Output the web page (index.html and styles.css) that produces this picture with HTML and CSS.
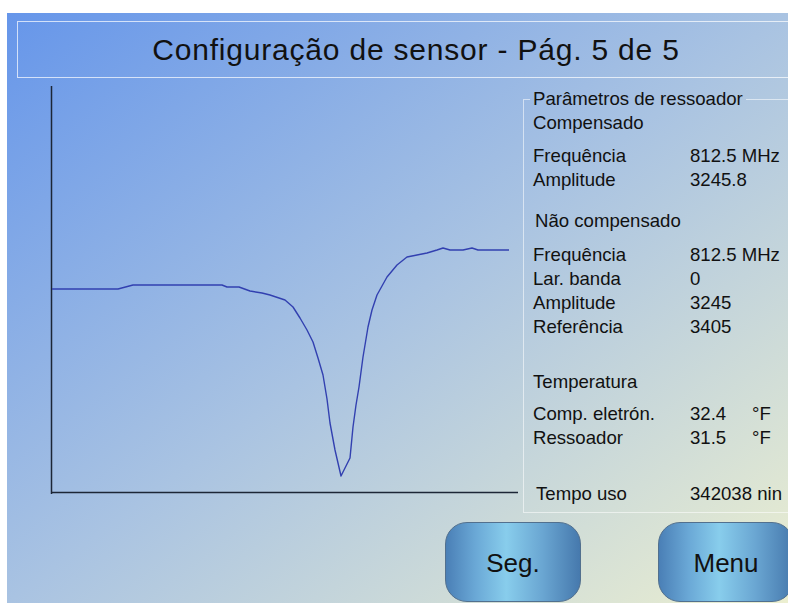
FILE: index.html
```html
<!DOCTYPE html>
<html lang="pt">
<head>
    <meta charset="UTF-8">
    <meta name="viewport" content="width=device-width, initial-scale=1.0">
    <title>Configuração de sensor</title>

    <link rel="stylesheet" href="styles.css">
</head>
<body>
    <div class="screen">
        <header class="title-bar">
            <h1>Configuração de sensor - Pág. 5 de 5</h1>
        </header>

        <main class="content">
            <!-- resonance curve -->
            <svg class="chart" width="475" height="420" viewBox="44 80 475 420">
                <line class="axis" x1="51.5" y1="86" x2="51.5" y2="494"></line>
                <line class="axis" x1="51" y1="492.5" x2="518" y2="492.5"></line>
                <polyline class="curve" points="52,289 118,289 133,285 222,285 227,287 239,287 250,291 262,293 270,295 285,300 293,307 300,318 307,330 313,342 318,358 323,375 327,399 330,423 335,450 341,476 350,458 353,427 356,405 359,387 363,357 368,327 372,310 377,295 382,286 387,277 397,265 407,257 417,255 427,253 437,250 443,248 450,250 463,250 472,248 478,250 509,250"></polyline>
            </svg>

            <fieldset class="params">
                <legend>Parâmetros de ressoador</legend>

                <div class="section-title">Compensado</div>
                <div class="rows first">
                    <span>Frequência</span><span>812.5 MHz</span>
                    <span>Amplitude</span><span>3245.8</span>
                </div>

                <div class="section-title shifted">Não compensado</div>
                <div class="rows shifted after-title">
                    <span>Frequência</span><span>812.5 MHz</span>
                    <span>Lar. banda</span><span>0</span>
                    <span>Amplitude</span><span>3245</span>
                    <span>Referência</span><span>3405</span>
                </div>

                <div class="section-title temp-title">Temperatura</div>
                <div class="rows temp">
                    <span>Comp. eletrón.</span><span>32.4</span><span>°F</span>
                    <span>Ressoador</span><span>31.5</span><span>°F</span>
                </div>

                <div class="rows usage">
                    <span>Tempo uso</span><span>342038 nin</span>
                </div>
            </fieldset>
        </main>

        <footer class="actions">
            <button class="key">Seg.</button>
            <button class="key">Menu</button>
        </footer>
    </div>
</body>
</html>
```

FILE: styles.css
```css
/* page */
body {
    margin: 0;
    background-color: #fff;
    font-family: "Liberation Sans", Arial, sans-serif;
    color: #111;
}

.screen {
    margin: 13px 0 0 7px;
    height: 590px;
    overflow: hidden;
    background: linear-gradient(to bottom right, #6696ea 0%, #a9c3e2 50%, #ecefd0 100%);
}

/* title */
.title-bar {
    margin: 8px 0 0 10px;
    width: 798px;
    height: 57px;
    box-sizing: border-box;
    border: 1px solid rgba(255, 255, 255, 0.7);
    display: flex;
    align-items: center;
    justify-content: center;
}

.title-bar h1 {
    margin: 0;
    font-size: 30px;
    letter-spacing: 0.8px;
    font-weight: normal;
}

/* chart + parameter box */
.content {
    display: flex;
    align-items: flex-start;
    margin-top: 2px;
}

.chart {
    display: block;
    margin-left: 37px;
    flex: none;
}

.axis {
    stroke: #1c2636;
    stroke-width: 1.5;
}

.curve {
    fill: none;
    stroke: #3240b0;
    stroke-width: 1.4;
    stroke-linejoin: round;
}

.params {
    margin: 7px 0 0 4px;
    width: 300px;
    flex: none;
    padding: 0 0 6px 6px;
    border: 1px solid rgba(255, 255, 255, 0.55);
    font-size: 18.6px;
    line-height: 24px;
}

.params legend {
    padding: 0 3px;
}

.section-title {
    padding-left: 3px;
}

.shifted {
    padding-left: 5px;
}

.rows {
    display: grid;
    grid-template-columns: 157px auto;
    padding-left: 3px;
}

.rows.first {
    margin-top: 9px;
}

.section-title.shifted {
    margin-top: 17px;
}

.rows.after-title {
    margin-top: 10px;
}

.temp-title {
    margin-top: 31px;
}

.rows.temp {
    margin-top: 8px;
    grid-template-columns: 157px 62px auto;
}

.rows.usage {
    margin-top: 32px;
    padding-left: 6px;
    grid-template-columns: 154px auto;
}

.rows span {
    white-space: nowrap;
}

/* buttons */
.actions {
    display: flex;
    gap: 77px;
    margin-top: 9px;
    padding-left: 438px;
}

.key {
    flex: none;
    width: 136px;
    height: 80px;
    padding-top: 3px;
    border: 1px solid #52708e;
    border-radius: 22px;
    background: linear-gradient(to right, #4a7fb6 0%, #6aa8d6 22%, #88cdec 45%, #6aa6d2 72%, #4679ad 100%);
    font-family: "Liberation Sans", Arial, sans-serif;
    font-size: 26px;
    color: #111;
    cursor: pointer;
}
```
